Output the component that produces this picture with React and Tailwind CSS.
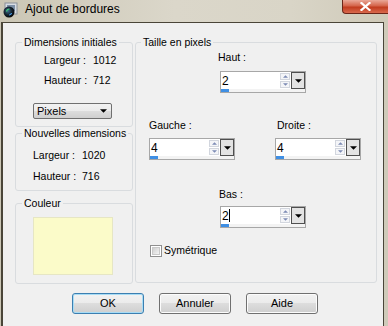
import React from 'react';

const TitleIcon = () => (
  <svg width="16" height="16" viewBox="0 0 16 16">
    <rect x="3" y="1" width="12" height="11" fill="#d8dde4" stroke="#8a9099" strokeWidth="1" />
    <rect x="5" y="3" width="8" height="6" fill="#7b8ea6" />
    <defs>
      <radialGradient id="lens" cx="0.4" cy="0.4" r="0.6">
        <stop offset="0" stopColor="#3b6f8f" />
        <stop offset="0.6" stopColor="#15222e" />
        <stop offset="1" stopColor="#05080b" />
      </radialGradient>
    </defs>
    <circle cx="7" cy="10" r="5.5" fill="url(#lens)" />
    <path d="M4.5 9.5 a3 3 0 0 1 3 -2.5" stroke="#3fd07a" strokeWidth="1.2" fill="none" />
    <path d="M9.5 11 a2.5 2.5 0 0 1 -2.5 2" stroke="#4aa8ff" strokeWidth="1.2" fill="none" />
  </svg>
);

const ArrowDown = ({ w = 7, color = '#000' }) => (
  <svg width={w} height={Math.ceil(w / 2)} viewBox="0 0 8 4">
    <path d="M0 0 H8 L4 4 Z" fill={color} />
  </svg>
);

const ArrowUp = ({ w = 5, color = '#000' }) => (
  <svg width={w} height={Math.ceil(w / 2)} viewBox="0 0 8 4">
    <path d="M0 4 H8 L4 0 Z" fill={color} />
  </svg>
);

function Spinner({ value, caret }) {
  return (
    <div className="w-[86px] h-[22px] border border-[#a7a7a7] bg-white flex flex-col">
      <div className="flex h-[17px]">
        <div className="flex-1 flex items-center pl-[1px] text-[12px] leading-none">
          {value}
          {caret && <span className="w-px h-[13px] bg-black" />}
        </div>
        <div className="w-[10px] flex flex-col gap-[1px] py-[1px] mr-[1px]">
          <div className="flex-1 border border-[#d2d6de] bg-[#f4f5f8] flex items-center justify-center">
            <ArrowUp w={5} color="#7d8bb5" />
          </div>
          <div className="flex-1 border border-[#d2d6de] bg-[#f4f5f8] flex items-center justify-center">
            <ArrowDown w={5} color="#7d8bb5" />
          </div>
        </div>
        <div className="w-[14px] border border-[#4f4f4f] bg-[#e3e3e3] flex items-center justify-center">
          <ArrowDown w={7} />
        </div>
      </div>
      <div className="flex-1 bg-[#f3f3f3]">
        <div className="w-[8px] h-full bg-[#3f8fe4]" />
      </div>
    </div>
  );
}

function Button({ children, primary }) {
  return (
    <div
      className={
        primary
          ? 'w-[72px] h-[21px] rounded-[3px] border border-[#3c7fb1] shadow-[inset_0_0_0_1px_#a8dcf5] bg-[linear-gradient(#f2f2f2,#ebebeb_50%,#dddddd_50%,#cfcfcf)] flex items-center justify-center'
          : 'w-[72px] h-[21px] rounded-[3px] border border-[#707070] shadow-[inset_0_0_0_1px_#fcfcfc] bg-[linear-gradient(#f2f2f2,#ebebeb_50%,#dddddd_50%,#cfcfcf)] flex items-center justify-center'
      }
    >
      {children}
    </div>
  );
}

function InfoRow({ label, value, className }) {
  return (
    <div className={'flex leading-[13px] ' + className}>
      <span className="w-[49px]">{label}</span>
      <span>{value}</span>
    </div>
  );
}

export default function App() {
  return (
    <div className="w-[388px] h-[326px] flex flex-col overflow-hidden bg-[linear-gradient(to_right,#cbc6b5,#dbd7ca_45%,#d9d5c7_75%,#cfcab9)] font-['Liberation_Sans',Arial,sans-serif] text-[10.5px] text-black">
      {/* title bar */}
      <div className="h-[22px] flex shrink-0">
        <div className="mt-[2px] ml-[2px]">
          <TitleIcon />
        </div>
        <div className="ml-[7px] mt-[2px] text-[12px] leading-[14px]">Ajout de bordures</div>
        <div className="ml-auto w-[46px] h-[14px] rounded-bl-[4px] border-l border-b border-[#6b2619] bg-[linear-gradient(#eaa898,#d4644a_45%,#c13b1e_55%,#d96a4e)] flex items-center justify-center">
          <svg width="11" height="9" viewBox="0 0 11 9">
            <path d="M1.5 1 L9.5 8 M9.5 1 L1.5 8" stroke="#fff" strokeWidth="2.2" strokeLinecap="square" />
          </svg>
        </div>
      </div>

      {/* client area */}
      <div className="flex-1 ml-[1px] mr-[4px] border-l-2 border-t border-r border-[#4a4538] bg-[#f0f0f0] flex flex-col">
        <div className="flex mt-[13px] pl-[12px]">
          {/* left column */}
          <div className="w-[118px] flex flex-col">
            <fieldset className="h-[91px] border border-[#d9dcdf] rounded-[3px]">
              <legend className="ml-[6px] px-[2px] leading-[13px]">Dimensions initiales</legend>
              <InfoRow className="mt-[5px] pl-[28px]" label="Largeur :" value="1012" />
              <InfoRow className="mt-[7px] pl-[28px]" label="Hauteur :" value="712" />
              <div className="mt-[16px] ml-[17px] w-[79px] h-[16px] rounded-[2px] border border-[#707070] bg-[linear-gradient(#f2f2f2,#ebebeb_50%,#dddddd_50%,#cfcfcf)] flex items-center pl-[3px] pr-[4px]">
                <span className="flex-1 text-[11px] leading-none">Pixels</span>
                <ArrowDown w={7} />
              </div>
            </fieldset>
            <fieldset className="h-[64px] border border-[#d9dcdf] rounded-[3px]">
              <legend className="ml-[6px] px-[2px] leading-[13px]">Nouvelles dimensions</legend>
              <InfoRow className="mt-[9px] pl-[17px]" label="Largeur :" value="1020" />
              <InfoRow className="mt-[8px] pl-[17px]" label="Hauteur :" value="716" />
            </fieldset>
            <fieldset className="mt-[6px] h-[87px] border border-[#d9dcdf] rounded-[3px]">
              <legend className="ml-[6px] px-[2px] leading-[13px]">Couleur</legend>
              <div className="mt-[7px] ml-[17px] w-[80px] h-[58px] bg-[#fbfbc9] border border-[#e6e6c4]" />
            </fieldset>
          </div>

          {/* right column */}
          <fieldset className="ml-[2px] w-[242px] h-[247px] border border-[#d9dcdf] rounded-[3px]">
            <legend className="ml-[5px] px-[2px] leading-[13px]">Taille en pixels</legend>
            <div className="mt-[2px] ml-[82px] leading-[13px]">Haut :</div>
            <div className="mt-[7px] ml-[84px]">
              <Spinner value="2" />
            </div>
            <div className="mt-[26px] flex">
              <div className="ml-[13px] w-[126px]">
                <div className="leading-[13px]">Gauche :</div>
                <div className="mt-[6px]">
                  <Spinner value="4" />
                </div>
              </div>
              <div>
                <div className="pl-[2px] leading-[13px]">Droite :</div>
                <div className="mt-[6px]">
                  <Spinner value="4" />
                </div>
              </div>
            </div>
            <div className="mt-[28px] ml-[83px] leading-[13px]">Bas :</div>
            <div className="mt-[5px] ml-[84px]">
              <Spinner value="2" caret />
            </div>
            <div className="mt-[16px] ml-[14px] flex items-center">
              <div className="w-[12px] h-[12px] border border-[#8f8f8f] bg-white p-[1px]">
                <div className="w-full h-full border border-[#c9c9c9] bg-[linear-gradient(135deg,#cfcfcf,#f4f4f4)]" />
              </div>
              <span className="ml-[2px] leading-[13px]">Symétrique</span>
            </div>
          </fieldset>
        </div>

        {/* buttons */}
        <div className="mt-[9px] ml-[69px] flex gap-[15px] text-[11px]">
          <Button primary>OK</Button>
          <Button>Annuler</Button>
          <Button>Aide</Button>
        </div>
      </div>
    </div>
  );
}
